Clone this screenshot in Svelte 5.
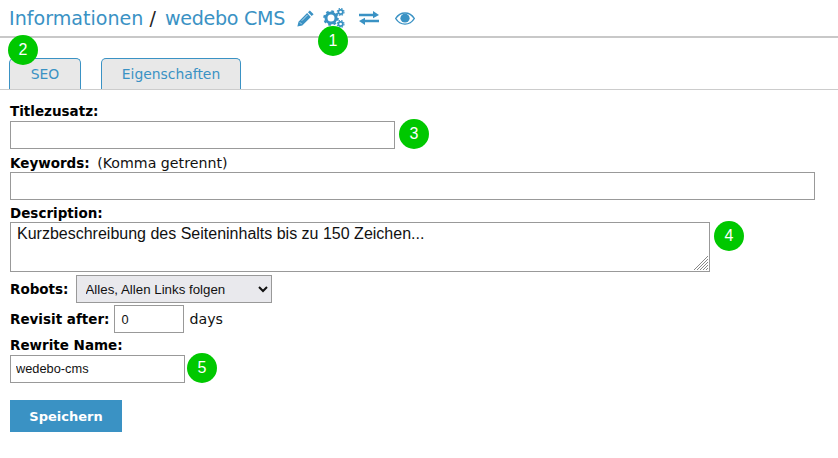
<script>
	let title = '';
	let keywords = '';
	let description = 'Kurzbeschreibung des Seiteninhalts bis zu 150 Zeichen...';
	let revisit = '0';
	let rewrite = 'wedebo-cms';
</script>

<div class="page">
	<header class="head">
		<h1>
			<a href="#info">Informationen</a> <span class="sep">/</span> <a class="cms" href="#page">wedebo CMS</a>
		</h1>
		<div class="tools">
			<svg class="pencil" viewBox="0 0 18 18" width="17" height="17" aria-hidden="true">
				<path d="M13.6 0.4 17.6 4.4 15.6 6.4 11.6 2.4ZM10.7 3.3 14.7 7.3 5.6 16.4 0.4 17.6 1.6 12.4Z" fill="#3a92c4" />
				<path d="M3 13 5 15M5 11.4 11.2 5.2" stroke="#fff" stroke-width="0.7" />
			</svg>
			<svg class="gears" viewBox="0 0 22 20" width="22" height="20" aria-hidden="true">
				<circle cx="8" cy="10" r="5" fill="none" stroke="#3a92c4" stroke-width="3" />
				<circle cx="8" cy="10" r="6.6" fill="none" stroke="#3a92c4" stroke-width="2.4" stroke-dasharray="2.6 2.6" />
				<circle cx="17.6" cy="4" r="2.2" fill="none" stroke="#3a92c4" stroke-width="1.7" />
				<circle cx="17.6" cy="4" r="3.4" fill="none" stroke="#3a92c4" stroke-width="1.1" stroke-dasharray="1.5 1.2" />
				<circle cx="17.6" cy="16" r="2.2" fill="none" stroke="#3a92c4" stroke-width="1.7" />
				<circle cx="17.6" cy="16" r="3.4" fill="none" stroke="#3a92c4" stroke-width="1.1" stroke-dasharray="1.5 1.2" />
			</svg>
			<svg class="swap" viewBox="0 0 20 16" width="20" height="14" preserveAspectRatio="none" aria-hidden="true">
				<path d="M0 3.2H14V0L20 4.6 14 8.4V6H0ZM20 10V12.8H6V16L0 11.4 6 7.6V10Z" fill="#3a92c4" />
			</svg>
			<svg class="eye" viewBox="0 0 20 14" width="20" height="13" preserveAspectRatio="none" aria-hidden="true">
				<path d="M0.7 7C3 3 6.2 1 10 1S17 3 19.3 7C17 11 13.8 13 10 13S3 11 0.7 7Z" fill="none" stroke="#3a92c4" stroke-width="1.5" />
				<circle cx="10" cy="6.6" r="4.6" fill="#3a92c4" />
			</svg>
		</div>
		<span class="badge badge-tools">1</span>
	</header>

	<nav class="tabs">
		<a class="tab seo" href="#seo">SEO</a>
		<a class="tab props" href="#props">Eigenschaften</a>
		<span class="badge badge-tab">2</span>
	</nav>

	<form class="form" on:submit|preventDefault>
		<label class="stack" for="title"><b>Titlezusatz:</b></label>
		<div class="row">
			<input id="title" class="text title" type="text" bind:value={title} />
			<span class="badge">3</span>
		</div>

		<label class="stack kw" for="keywords"><b>Keywords:</b> (Komma getrennt)</label>
		<input id="keywords" class="text keywords" type="text" bind:value={keywords} />

		<label class="stack desc" for="description"><b>Description:</b></label>
		<div class="row top">
			<div class="area">
				<textarea id="description" class="text description" bind:value={description}></textarea>
				<svg class="grip" viewBox="0 0 16 16" width="16" height="16" aria-hidden="true">
					<path d="M1 15 15 1M4 15 15 4M7 15 15 7M10 15 15 10M13 15 15 13" stroke="#888" stroke-width="1" />
				</svg>
			</div>
			<span class="badge">4</span>
		</div>

		<div class="inline robots">
			<label for="robots"><b>Robots:</b></label>
			<select id="robots">
				<option>Alles, Allen Links folgen</option>
			</select>
		</div>

		<div class="inline revisit">
			<label for="revisit"><b>Revisit after:</b></label>
			<input id="revisit" class="text small" type="text" bind:value={revisit} />
			<span>days</span>
		</div>

		<label class="stack rewrite-label" for="rewrite"><b>Rewrite Name:</b></label>
		<div class="row tight">
			<input id="rewrite" class="text small rewrite" type="text" bind:value={rewrite} />
			<span class="badge">5</span>
		</div>

		<button class="save" type="submit">Speichern</button>
	</form>
</div>

<style>
	:global(body) {
		background: #fff;
	}

	.page {
		position: relative;
		width: 838px;
		height: 458px;
		overflow: hidden;
		box-sizing: border-box;
		font-family: "DejaVu Sans", Verdana, sans-serif;
		font-size: 14.2px;
		color: #111;
	}

	b {
		font-size: 13.5px;
		color: #000;
	}

	.head {
		position: relative;
		display: flex;
		align-items: center;
		height: 36px;
		padding-left: 9px;
		border-bottom: 2px solid #c8c8c8;
	}

	h1 {
		margin: 0;
		font-size: 19.1px;
		font-weight: 400;
		white-space: nowrap;
	}

	h1 a {
		color: #3a92c4;
		text-decoration: none;
	}

	.sep {
		color: #222;
	}

	.cms {
		margin-left: 3px;
		letter-spacing: -0.3px;
	}

	.tools {
		display: flex;
		align-items: center;
		margin-left: 12px;
	}

	.gears {
		margin-left: 9px;
	}

	.swap {
		margin-left: 14px;
	}

	.eye {
		margin-left: 16px;
	}

	.badge {
		display: flex;
		align-items: center;
		justify-content: center;
		flex: none;
		width: 30px;
		height: 30px;
		border-radius: 50%;
		background: #00c800;
		color: #fff;
		font-family: "Liberation Sans", Arial, sans-serif;
		font-size: 16px;
	}

	.badge-tools {
		position: absolute;
		left: 318px;
		top: 26px;
	}

	.badge-tab {
		position: absolute;
		left: 8px;
		top: -23px;
	}

	.tabs {
		position: relative;
		display: flex;
		gap: 20px;
		height: 31px;
		margin-top: 20px;
		padding-left: 9px;
		border-bottom: 1px solid #ccc;
	}

	.tab {
		display: flex;
		align-items: center;
		justify-content: center;
		box-sizing: border-box;
		height: 31px;
		border: 1px solid #3a92c4;
		border-bottom: none;
		border-radius: 5px 5px 0 0;
		background: #e8e8e8;
		color: #3a92c4;
		font-size: 13.9px;
		text-decoration: none;
	}

	.seo {
		width: 72px;
	}

	.props {
		width: 140px;
	}

	.form {
		display: flex;
		flex-direction: column;
		align-items: flex-start;
		padding: 13px 0 0 10px;
	}

	.stack {
		line-height: 16px;
	}

	.row {
		display: flex;
		align-items: center;
		gap: 4px;
	}

	.row.top {
		align-items: flex-start;
	}

	.row.tight {
		gap: 2px;
	}

	.text {
		box-sizing: border-box;
		margin: 0;
		border: 1px solid #999;
		border-radius: 0;
		background: #fff;
		padding: 1px 5px;
		font-family: "Liberation Sans", Arial, sans-serif;
		color: #111;
		outline: none;
	}

	.title {
		width: 385px;
		height: 28px;
		margin-top: 1px;
	}

	.kw {
		margin-top: 6px;
	}

	.kw b {
		margin-right: 3px;
	}

	.keywords {
		width: 805px;
		height: 28px;
		margin-top: 1px;
	}

	.desc {
		margin-top: 5px;
	}

	.area {
		position: relative;
		margin-top: 1px;
		height: 50px;
	}

	.description {
		display: block;
		width: 700px;
		height: 50px;
		padding: 2px 6px 0;
		font-size: 16px;
		line-height: 18px;
		resize: none;
	}

	.grip {
		position: absolute;
		right: 1px;
		bottom: 1px;
	}

	.inline {
		display: flex;
		align-items: center;
		height: 28px;
	}

	.robots {
		margin-top: 3px;
		gap: 7px;
	}

	select {
		box-sizing: border-box;
		width: 196px;
		height: 28px;
		margin: 0;
		border: 1px solid #999;
		border-radius: 0;
		background-color: #e9e9ed;
		padding: 0 4px 0 5px;
		font-family: "Liberation Sans", Arial, sans-serif;
		font-size: 13.3px;
		color: #111;
	}

	.revisit {
		margin-top: 2px;
		gap: 5px;
	}

	.small {
		font-size: 12.8px;
	}

	.revisit .small {
		width: 70px;
		height: 28px;
		padding-left: 6px;
	}

	.rewrite-label {
		margin-top: 4px;
	}

	.rewrite {
		width: 175px;
		height: 28px;
		margin-top: 1px;
	}

	.save {
		width: 112px;
		height: 32px;
		margin-top: 17px;
		border: none;
		background: #3a92c4;
		color: #fff;
		font-family: "DejaVu Sans", Verdana, sans-serif;
		font-size: 13px;
		font-weight: 700;
	}
</style>
